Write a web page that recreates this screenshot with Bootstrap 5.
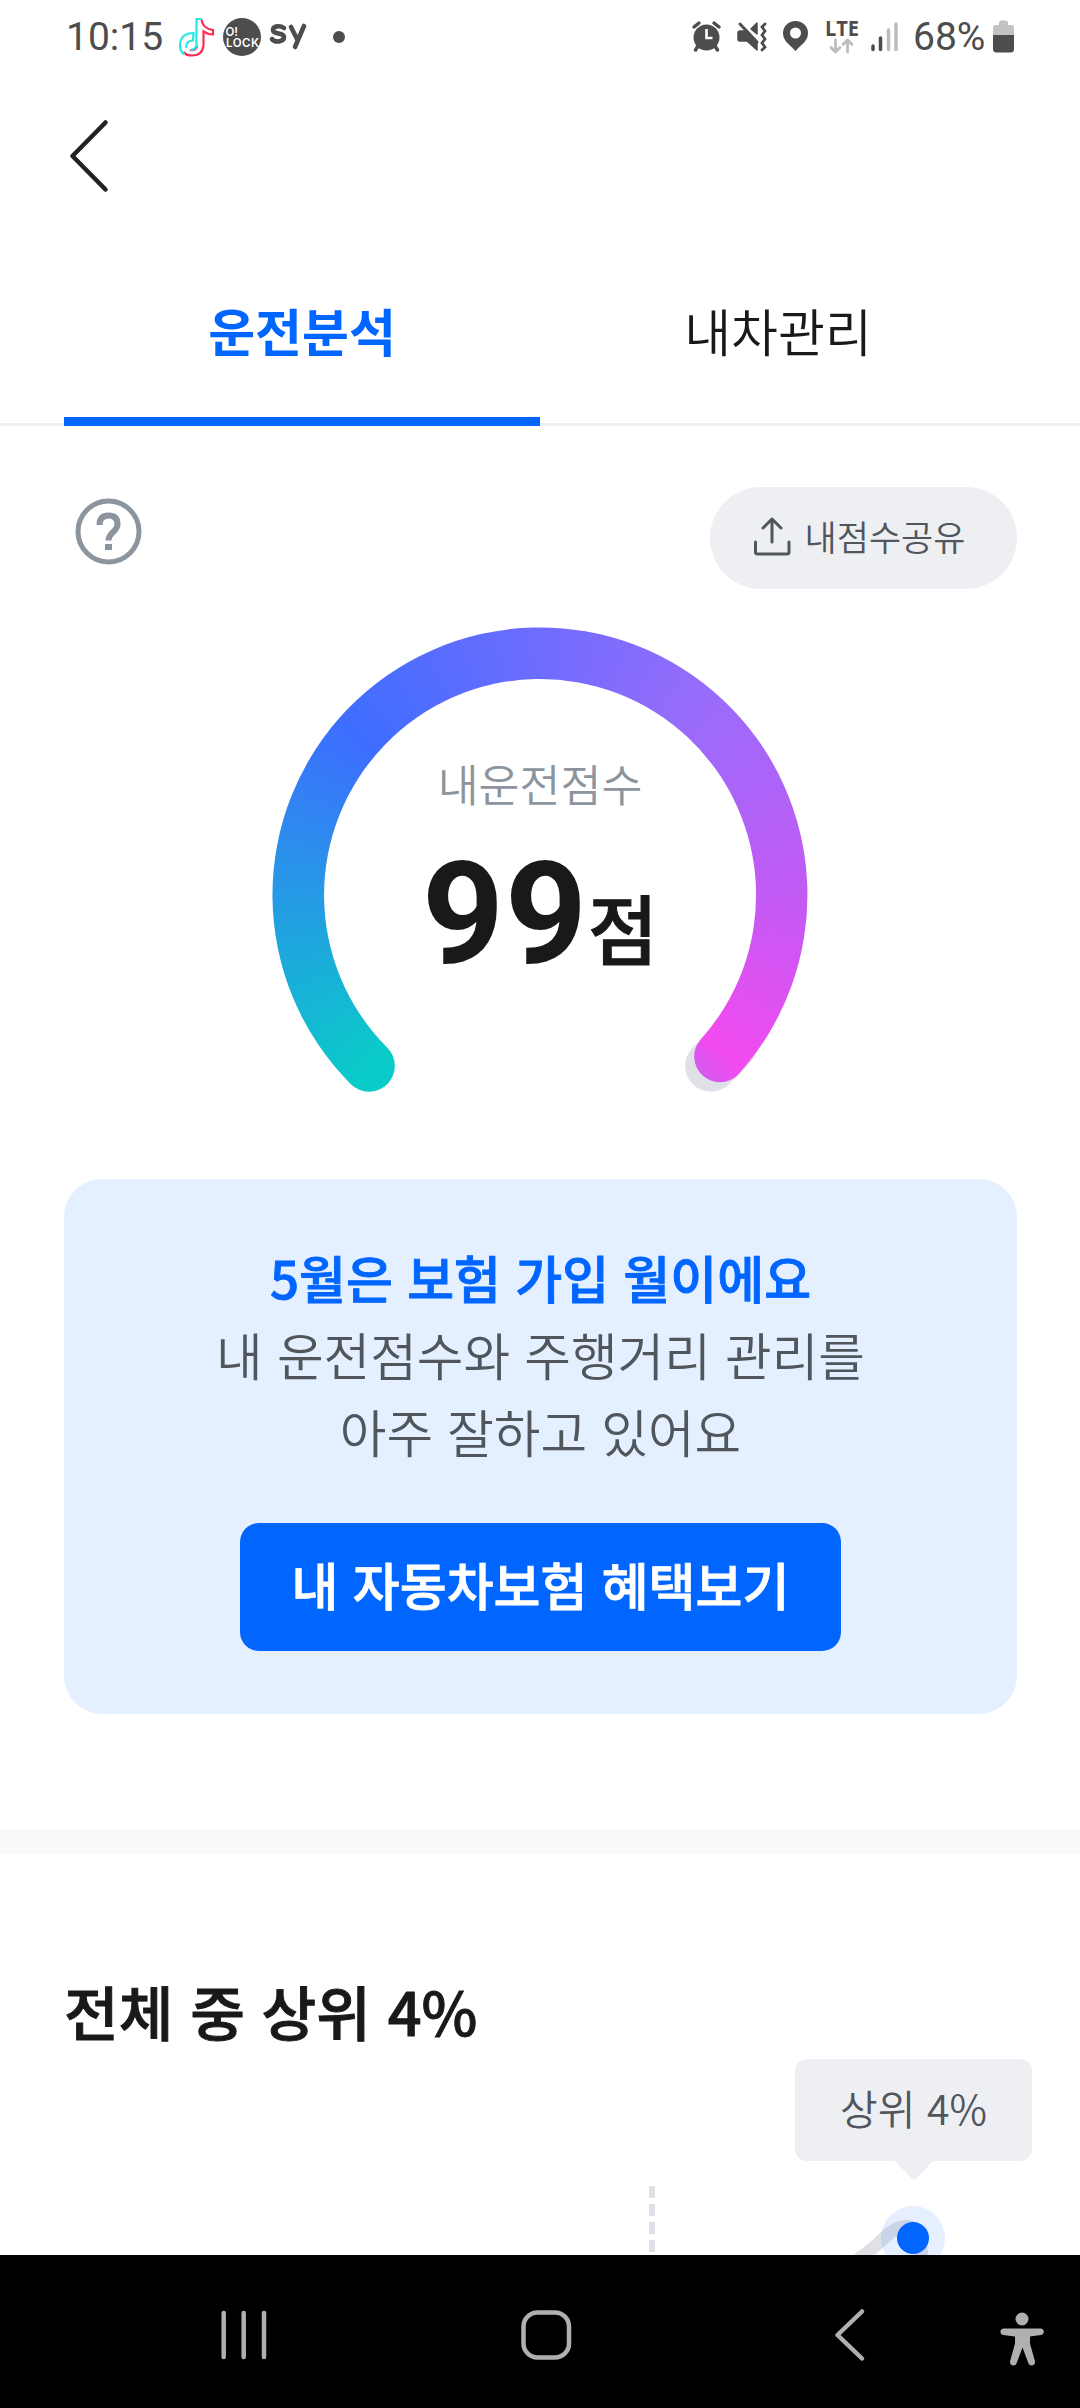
<!DOCTYPE html>
<html lang="ko">
<head>
<meta charset="utf-8">
<meta name="viewport" content="width=device-width, initial-scale=1">
<title>운전분석</title>
<link href="https://cdn.jsdelivr.net/npm/bootstrap@5.3.0/dist/css/bootstrap.min.css" rel="stylesheet">
<style>
  body { font-family: "Noto Sans CJK KR", sans-serif; font-weight: 350; color: #17191b; background: #fff; width: 1080px; height: 2408px; overflow: hidden; }
  svg { display: block; flex-shrink: 0; }
  .statusbar { height: 74px; padding-left: 66px; font-family: Roboto, sans-serif; font-weight: 400; font-size: 39px; line-height: 74px; color: #4d4d4d; }
  .clock { width: 113px; }
  .battery-text { width: 78px; }
  .topbar { height: 163px; padding: 44px 0 0 68px; }
  .tabs-main { height: 189px; padding: 0 64px; border-bottom: 3px solid #eeeff3; }
  .tabs-main .nav-link { height: 189px; padding: 0; border-radius: 0; font-size: 51px; line-height: 186px; color: #17191b; border-bottom: 9px solid transparent; text-align: center; }
  .tabs-main .nav-link.active { color: #06f; border-bottom-color: #06f; font-weight: 700; }
  .tools { padding: 61px 63px 0 74px; height: 201px; }
  .share { width: 307px; height: 102px; background: #eeeff3; color: #50565b; font-size: 35px; font-weight: 350; line-height: 50px; gap: 13px; padding: 0 8px 5px 0; border: 0; }
  .share svg { margin-top: 3px; }
  .gauge { width: 536px; height: 536px; margin: 0 auto; left: 0; }
  .gauge-arc { width: 536px; height: 536px; background: conic-gradient(from 225deg, #0acbc8 0deg, #3d6eff 85deg, #6e6cfe 135deg, #986cfb 174deg, #c25af4 225deg, #f24bf0 266deg, #d05cef 274deg, #0acbc8 300deg, #0acbc8 360deg);
    clip-path: path('M78.85 457.15A267.5 267.5 0 1 1 465.8 448A25.75 25.75 0 0 1 427.8 413.4A216 216 0 1 0 115.3 420.7A25.75 25.75 0 0 1 78.85 457.15Z'); }
  .gauge-label { padding-top: 123px; font-size: 44.5px; line-height: 66px; color: #8c949e; }
  .score { height: 150px; margin-top: 19px; line-height: 150px; }
  .score-num { font-family: Roboto, sans-serif; font-weight: 700; font-size: 143px; letter-spacing: 1px; transform: translateY(4px); }
  .score-unit { font-size: 76px; font-weight: 500; -webkit-text-stroke: 1px #17191b; }
  .notice { margin: 16px 63px 0 64px; height: 535px; border-radius: 38px; background: #e4f0ff; padding-top: 60px; font-size: 50.700px; line-height: 77px; color: #50565b; }
  .notice strong { color: #06f; font-size: 51px; font-weight: 500; -webkit-text-stroke: .9px #06f; }
  .benefit { width: 601px; height: 128px; margin-top: 53px; border-radius: 19px; background: #06f; color: #fff; font-size: 51px; font-weight: 500; -webkit-text-stroke: .8px #fff; padding: 0 0 6px; border: 0; line-height: 77px; vertical-align: top; }
  .divider { height: 25px; margin-top: 115px; background: #f8f9fb; }
  .rank { height: 401px; }
  .rank h2 { margin: 0; padding: 112px 0 0 64px; font-size: 59.500px; line-height: 89px; font-weight: 500; -webkit-text-stroke: .9px #17191b; }
  .chart { left: 0; top: 0; }
  .rank-tip { left: 795px; top: 205px; width: 237px; height: 102px; border-radius: 12px; background: #eeeff3; color: #50565b; font-size: 41px; line-height: 97px; text-align: center; }
  .softkeys { height: 153px; background: #000; }
</style>
</head>
<body class="d-flex flex-column">
  <header class="statusbar d-flex align-items-center">
    <span class="clock">10:15</span>
    <svg width="180" height="74" viewBox="179 0 180 74" fill="none">
      <path stroke="#fe2c55" stroke-width="2.200" d="M201.500 19.500q1 9 11.500 10.500v4.500q-5 0-9.500-3v14q-1 10-11.500 10-6 0-8.500-3.500M197 46q-1 5-7 4"/>
      <path stroke="#25e8e4" stroke-width="2.200" d="M202 19h-5.500v26q-1 5-6 5M193.500 37v-4q-13 0-13.500 12.500 0 6 4.500 9M186.500 48q-1-7 6.500-7.500v-4"/>
      <circle cx="242" cy="37" r="19" fill="#4d4d4d"/>
      <g fill="#fff" font-family="Inter" font-weight="600" font-size="11.500"><text x="225.500" y="36">O!</text><text x="226" y="46.500" textLength="33">LOCK</text></g>
      <path stroke="#4d4d4d" stroke-width="4.600" stroke-linecap="round" stroke-linejoin="round" d="M284 28c-4-3-11-2-11 2 0 5 11 2 11 7 0 5-9 6-12 2M291 27l6 12M304 26l-9 21"/>
      <circle cx="339" cy="37" r="6" fill="#4d4d4d"/>
    </svg>
    <svg class="ms-auto" width="224" height="74" viewBox="690 0 224 74" fill="none" stroke-linecap="round">
      <g stroke="#4d4d4d">
        <circle cx="707.500" cy="37.500" r="13" fill="#4d4d4d" stroke="none"/>
        <path stroke-width="3.500" d="M695 27l5-4M720 27l-5-4M699 46l-2.500 4M716 46l2.500 4"/>
        <path stroke="#fff" stroke-width="2.600" stroke-linecap="butt" d="M707.500 29v9h6"/>
        <path fill="#4d4d4d" stroke-width="1.500" stroke-linejoin="round" d="M741 31h7l10 11v8l-10-9h-7q-2 0-2-2v-6q0-2 2-2zM758 23v11l-6-5z"/>
        <path stroke-width="3" d="M741 24l17 18"/>
        <path stroke-width="2.800" d="M766 24l-3 3 3 4-3 4 3 4-3 4 3 4-3 3"/>
      </g>
      <path fill="#4d4d4d" fill-rule="evenodd" d="M796.500 21c7 0 12.500 5 12.500 12 0 8-6 11-12.500 18C790 44 784 41 784 33c0-7 5.500-12 12.500-12zm0 6.500a5.500 5.500 0 1 0 0 11 5.500 5.500 0 0 0 0-11z"/>
      <text x="826" y="36" fill="#4d4d4d" font-family="Open Sans" font-weight="700" font-size="21" textLength="34" lengthAdjust="spacingAndGlyphs">LTE</text>
      <path stroke="#bdbdbd" stroke-width="2.800" stroke-linejoin="round" d="M836.500 40v12M832 47.500l4.500 4.500 4.500-4.500M848.500 52V40M844 44.500l4.500-4.500 4.500 4.500"/>
      <path stroke="#4d4d4d" stroke-width="3.500" d="M874 46v3.500M881.500 38v11.500"/><path stroke="#bdbdbd" stroke-width="3.500" d="M889.500 30v19.500M897 24v25.500"/>
    </svg>
    <span class="battery-text">68%</span>
    <svg width="89" height="74" viewBox="991 0 89 74"><path fill="#c2c2c2" d="M993 35v-7q0-3 3-3h3v-2q0-2.500 2.500-2.500h4q2.500 0 2.500 2.500v2h3q3 0 3 3v7z"/><path fill="#4d4d4d" d="M993 35h21v14q0 3.500-3.500 3.500h-14q-3.500 0-3.500-3.500z"/></svg>
  </header>
  <div class="topbar"><svg width="42" height="76" viewBox="68 118 42 76" fill="none" stroke="#222" stroke-width="4.500" stroke-linecap="round" stroke-linejoin="round"><path d="M105.500 122.500L72.500 156l33 33.500"/></svg></div>
  <nav class="nav nav-fill tabs-main flex-nowrap">
    <a class="nav-link active w-50">운전분석</a>
    <a class="nav-link w-50">내차관리</a>
  </nav>
  <section class="tools d-flex justify-content-between align-items-start">
    <svg class="mt-2" width="70" height="74" viewBox="74 495 70 74" fill="none" stroke="#8c949e"><circle cx="108.500" cy="531.500" r="30.500" stroke-width="5"/><path stroke-width="6" d="M99.500 525q0-9.500 9-9.500t9 8.500c0 8-9 8-9 16.500"/><path fill="#8c949e" stroke="none" d="M105 544h7v6h-7z"/></svg>
    <button class="btn rounded-pill share d-flex align-items-center justify-content-center">
      <svg width="38" height="40" viewBox="754 518 38 40" fill="none" stroke="#50565b" stroke-width="3" stroke-linecap="round" stroke-linejoin="round"><path d="M773 543v-23M764 529l9-9 9 9M756.500 543v10q0 2 2 2h29.500q2 0 2-2v-10"/></svg>
      <span>내점수공유</span>
    </button>
  </section>
  <section class="gauge position-relative text-center flex-shrink-0">
    <svg class="position-absolute top-0 start-0" width="536" height="536" fill="none"><path stroke="#e0e1e6" stroke-width="51.500" stroke-linecap="round" d="M460 417A241.700 241.700 0 0 1 438.900 438.900"/></svg>
    <div class="gauge-arc position-absolute top-0 start-0"></div>
    <div class="position-relative">
      <div class="gauge-label">내운전점수</div>
      <div class="score d-flex justify-content-center align-items-baseline"><span class="score-num">99</span><span class="score-unit">점</span></div>
    </div>
  </section>
  <section class="notice text-center flex-shrink-0">
    <strong class="d-block">5월은 보험 가입 월이에요</strong>
    <div>내 운전점수와 주행거리 관리를<br>아주 잘하고 있어요</div>
    <button class="btn benefit">내 자동차보험 혜택보기</button>
  </section>
  <div class="divider flex-shrink-0"></div>
  <section class="rank position-relative overflow-hidden flex-shrink-0">
    <h2>전체 중 상위 4%</h2>
    <svg class="chart position-absolute" width="1080" height="401" viewBox="0 1854 1080 401" fill="none">
      <path stroke="#e0e1e6" stroke-width="6" stroke-dasharray="12 6" d="M652 2186v66"/>
      <path stroke="#e0e1e6" stroke-width="13" d="M850 2265Q870 2252 884 2238T911 2227Q922 2230 922 2265"/>
      <circle cx="913" cy="2238" r="32" fill="#06f" fill-opacity=".1"/><circle cx="913" cy="2238" r="16" fill="#06f"/>
      <path fill="#eeeff3" d="M895 2161h38l-19 19.500z"/>
    </svg>
    <div class="rank-tip position-absolute">상위 4%</div>
  </section>
  <footer class="softkeys flex-shrink-0">
    <svg width="1080" height="153" viewBox="0 2255 1080 153" fill="none" stroke="#b0b0b0" stroke-width="4.500" stroke-linecap="round">
      <path d="M223.700 2313v44M243.700 2313v44M264 2313v44"/>
      <rect x="523.500" y="2312.500" width="45.500" height="45" rx="14"/>
      <path stroke-linejoin="round" d="M862 2311.500L837.500 2335l24.500 23.500"/>
      <g fill="#b0b0b0" stroke="none"><circle cx="1022" cy="2319" r="6.500"/><path d="M1004 2328.500h37a3.300 3.300 0 0 1 0 6.500l-11 1.500v7l5 18q0 4-3.500 4-2.500 0-3-2l-6-16-6 16q-.5 2-3 2-3.500 0-3.500-4l5-18v-7l-12-1.500a3.300 3.300 0 0 1 1-6.500z"/></g>
    </svg>
  </footer>
<script src="https://cdn.jsdelivr.net/npm/bootstrap@5.3.0/dist/js/bootstrap.bundle.min.js"></script>
</body>
</html>
